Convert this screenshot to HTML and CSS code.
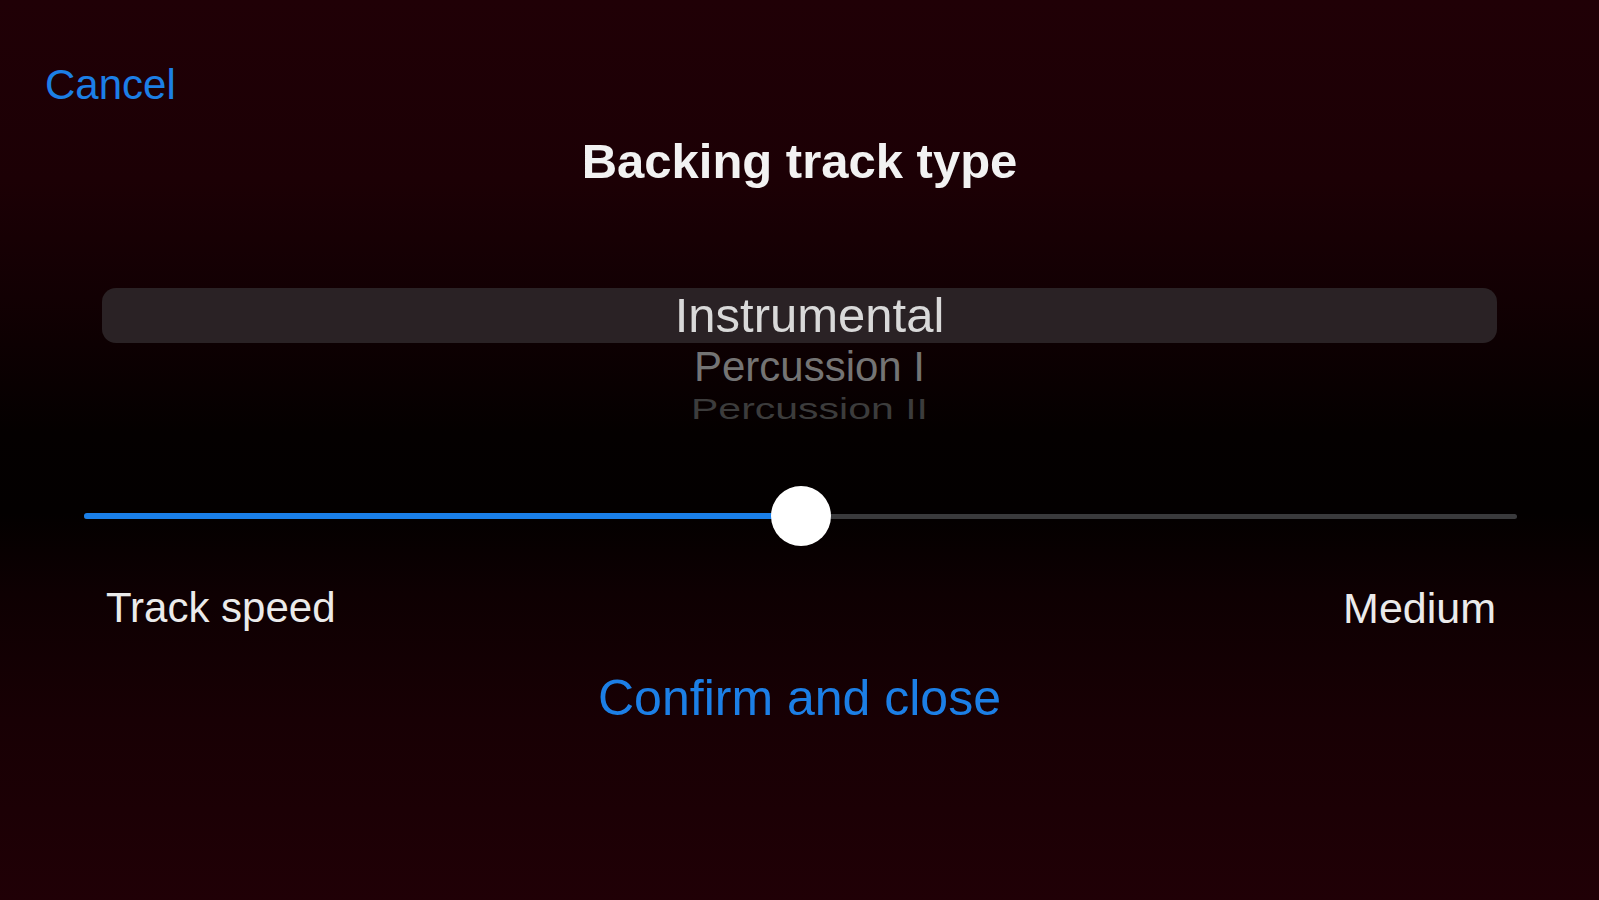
FILE: index.html
```html
<!DOCTYPE html>
<html lang="en">
<head>
  <meta charset="UTF-8">
  <meta name="viewport" content="width=device-width, initial-scale=1.0">
  <title>Backing track type</title>
  <link rel="stylesheet" href="styles.css">
</head>
<body>
  <div class="sheet">
    <div class="topbar">
      <a class="link cancel" href="#">Cancel</a>
    </div>

    <h1 class="title">Backing track type</h1>

    <div class="picker">
      <div class="row selected">Instrumental</div>
      <div class="row near">Percussion I</div>
      <div class="row far">Percussion II</div>
    </div>

    <div class="slider">
      <div class="track">
        <div class="fill" style="width: 50%"></div>
      </div>
      <div class="thumb" style="left: 50%"></div>
    </div>

    <div class="labels">
      <span>Track speed</span>
      <span>Medium</span>
    </div>

    <a class="link confirm" href="#">Confirm and close</a>
  </div>
</body>
</html>
```

FILE: styles.css
```css
body {
  margin: 0;
  height: 900px;
  overflow: hidden;
  font-family: "Liberation Sans", Arial, sans-serif;
  color: #ededed;
  background: linear-gradient(180deg,
    #200006 0%,
    #1c0005 20%,
    #120003 33%,
    #040000 48%,
    #030000 57%,
    #0e0002 66%,
    #180004 80%,
    #200006 100%);
}
.sheet {
  display: flex;
  flex-direction: column;
}
.link {
  color: #1c7fe6;
  text-decoration: none;
}
.topbar {
  padding: 64px 0 0 45px;
}
.cancel {
  display: inline-block;
  font-size: 42px;
  line-height: 42px;
}
.title {
  margin: 31px 0 0;
  text-align: center;
  font-size: 49px;
  line-height: 49px;
  font-weight: bold;
  color: #f2f2f2;
}
.picker {
  margin: 102px 102px 0;
  height: 133px;
}
.row {
  text-align: center;
  padding-left: 20px;
  white-space: nowrap;
}
.selected {
  height: 55px;
  line-height: 55px;
  font-size: 49px;
  color: #d9d9d9;
  background: #2a2225;
  border-radius: 14px;
}
.near {
  height: 48px;
  line-height: 48px;
  font-size: 42px;
  color: #747474;
}
.far {
  height: 40px;
  margin-top: 4px;
  line-height: 40px;
  font-size: 41px;
  color: #3c3c3c;
  transform: scaleY(0.72);
  transform-origin: top;
}
.slider {
  position: relative;
  margin: 65px 82px 0 84px;
  height: 60px;
  display: flex;
  align-items: center;
}
.track {
  flex: 1;
  height: 5px;
  border-radius: 3px;
  background: #3a3a3c;
}
.fill {
  height: 6px;
  margin-top: -0.5px;
  border-radius: 3px;
  background: #1a7fe8;
}
.thumb {
  position: absolute;
  top: 0;
  width: 60px;
  height: 60px;
  margin-left: -30px;
  border-radius: 50%;
  background: #fff;
}
.labels {
  display: flex;
  justify-content: space-between;
  margin-top: 41px;
  padding: 0 103px 0 106px;
  font-size: 42px;
  line-height: 42px;
  color: #ebebeb;
}
.labels span:last-child {
  font-size: 43px;
}
.confirm {
  margin-top: 44px;
  align-self: center;
  font-size: 50px;
  line-height: 50px;
}
```
